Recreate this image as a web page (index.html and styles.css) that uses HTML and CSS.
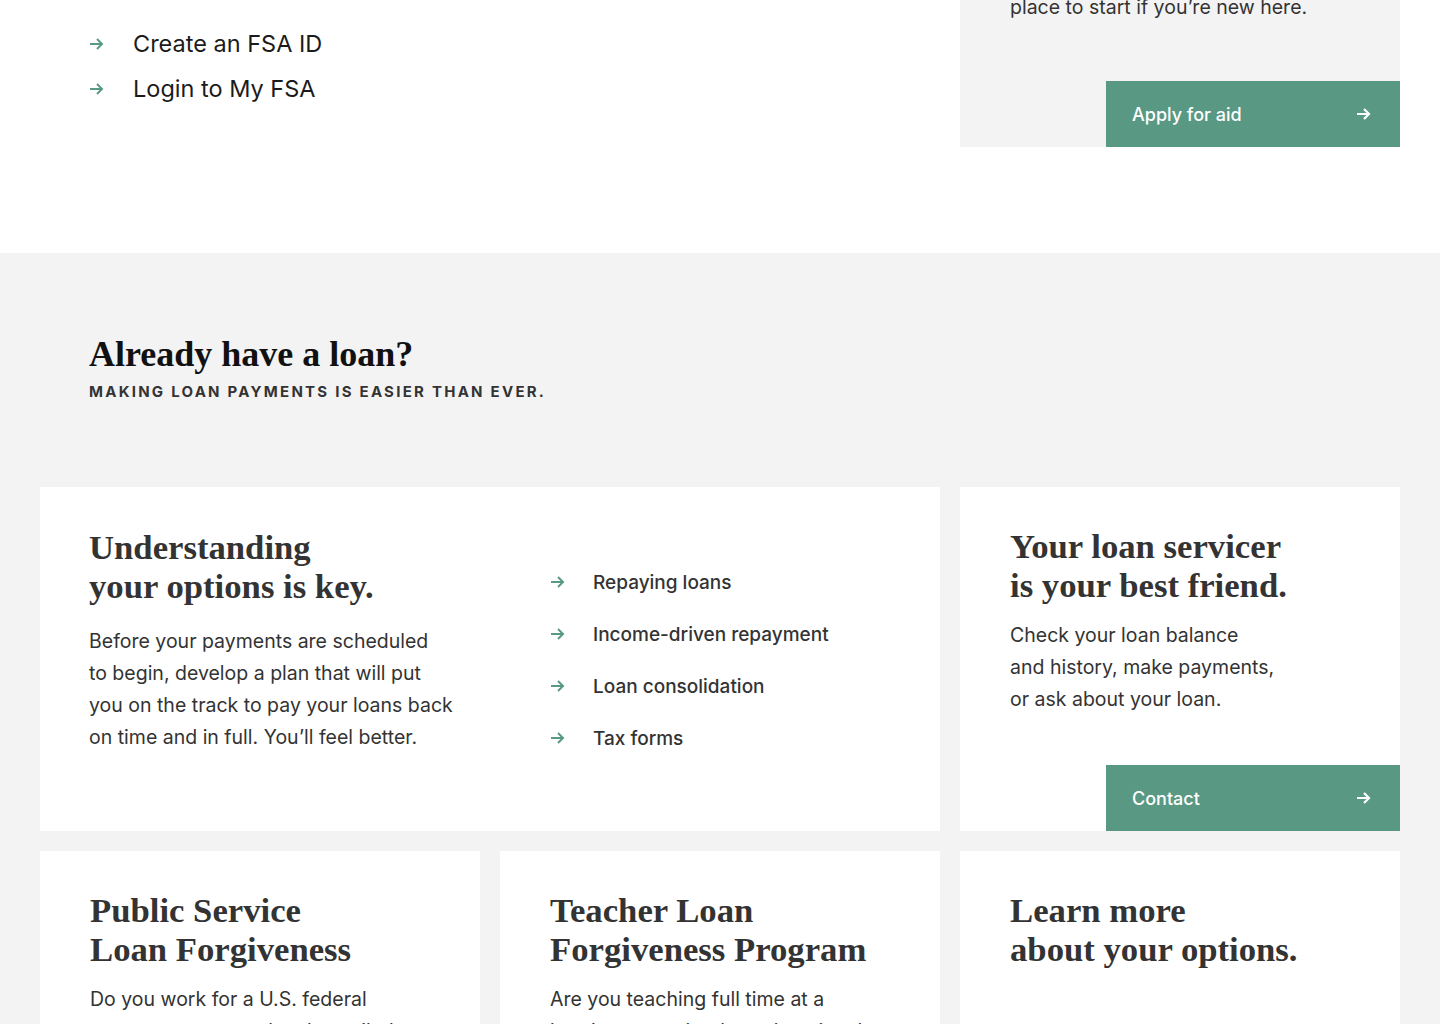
FILE: index.html
```html
<!DOCTYPE html>
<html lang="en">
<head>
<meta charset="utf-8">
<title>Federal Student Aid</title>
<link rel="stylesheet" href="styles.css">
</head>
<body>
<div class="page">
  <section class="top">
    <div class="top-left">
      <ul class="big-links">
        <li><svg class="arrow" viewBox="0 0 16 14"><path d="M1 7h12M8 2l5 5-5 5"/></svg><a href="#">Create an FSA ID</a></li>
        <li><svg class="arrow" viewBox="0 0 16 14"><path d="M1 7h12M8 2l5 5-5 5"/></svg><a href="#">Login to My FSA</a></li>
      </ul>
    </div>
    <div class="promo">
      <p class="promo-text">place to start if you’re new here.</p>
      <a class="btn" href="#"><span>Apply for aid</span><svg class="btn-arrow" viewBox="0 0 16 14"><path d="M1 7h12M8 2l5 5-5 5"/></svg></a>
    </div>
  </section>

  <section class="loans">
    <header class="loans-head">
      <h2 class="section-title">Already have a loan?</h2>
      <p class="eyebrow">Making loan payments is easier than ever.</p>
    </header>

    <div class="grid">
      <article class="card card-wide">
        <div class="card-copy">
          <h3 class="card-title">Understanding<br>your options is key.</h3>
          <p class="card-text">Before your payments are scheduled<br>to begin, develop a plan that will put<br>you on the track to pay your loans back<br>on time and in full. You’ll feel better.</p>
        </div>
        <ul class="link-list">
          <li><svg class="arrow" viewBox="0 0 16 14"><path d="M1 7h12M8 2l5 5-5 5"/></svg><a href="#">Repaying loans</a></li>
          <li><svg class="arrow" viewBox="0 0 16 14"><path d="M1 7h12M8 2l5 5-5 5"/></svg><a href="#">Income-driven repayment</a></li>
          <li><svg class="arrow" viewBox="0 0 16 14"><path d="M1 7h12M8 2l5 5-5 5"/></svg><a href="#">Loan consolidation</a></li>
          <li><svg class="arrow" viewBox="0 0 16 14"><path d="M1 7h12M8 2l5 5-5 5"/></svg><a href="#">Tax forms</a></li>
        </ul>
      </article>

      <article class="card card-cta">
        <h3 class="card-title">Your loan servicer<br>is your best friend.</h3>
        <p class="card-text tight">Check your loan balance<br>and history, make payments,<br>or ask about your loan.</p>
        <a class="btn" href="#"><span>Contact</span><svg class="btn-arrow" viewBox="0 0 16 14"><path d="M1 7h12M8 2l5 5-5 5"/></svg></a>
      </article>

      <article class="card card-small">
        <h3 class="card-title">Public Service<br>Loan Forgiveness</h3>
        <p class="card-text tight">Do you work for a U.S. federal<br>government, state, local, or tribal<br>organization?</p>
      </article>

      <article class="card card-small">
        <h3 class="card-title">Teacher Loan<br>Forgiveness Program</h3>
        <p class="card-text tight">Are you teaching full time at a<br>low-income school or educational<br>service agency?</p>
      </article>

      <article class="card card-small">
        <h3 class="card-title">Learn more<br>about your options.</h3>
        <ul class="link-list small-list">
          <li><svg class="arrow" viewBox="0 0 16 14"><path d="M1 7h12M8 2l5 5-5 5"/></svg><a href="#">Defaulted loans</a></li>
          <li><svg class="arrow" viewBox="0 0 16 14"><path d="M1 7h12M8 2l5 5-5 5"/></svg><a href="#">Loan forgiveness</a></li>
        </ul>
      </article>
    </div>
  </section>
</div>
</body>
</html>
```

FILE: styles.css
```css
* { box-sizing: border-box; }

html, body {
  margin: 0;
  padding: 0;
  background: #ffffff;
  overflow: hidden;
}

body {
  font-family: Inter, "Noto Sans", "Liberation Sans", sans-serif;
  color: #333333;
}

a { color: inherit; text-decoration: none; }
ul { list-style: none; margin: 0; padding: 0; }
p, h2, h3 { margin: 0; }

.page {
  margin-top: -40px;
}

.arrow {
  width: 16px;
  height: 14px;
  flex: none;
  fill: none;
  stroke: #5a9a84;
  stroke-width: 2;
}

/* Top */
.top {
  display: grid;
  grid-template-columns: 1fr 440px;
  column-gap: 20px;
  align-items: start;
  padding: 0 40px 106px;
}

.top-left {
  padding: 61px 0 0 49px;
}

.big-links li {
  display: flex;
  align-items: center;
  gap: 28px;
  height: 45px;
  font-size: 23.5px;
  color: #1b1b1b;
}

.promo {
  background: #f3f3f3;
  padding-top: 31px;
  display: flex;
  flex-direction: column;
}

.promo-text {
  padding-left: 50px;
  font-size: 19.5px;
  line-height: 32px;
  color: #333;
}

.btn {
  display: flex;
  align-items: center;
  justify-content: space-between;
  align-self: flex-end;
  width: 294px;
  height: 66px;
  padding: 0 28px 0 26px;
  background: #599883;
  color: #ffffff;
  font-size: 18px;
  font-weight: 500;
}

.promo .btn { margin-top: 58px; }

.btn-arrow {
  width: 16px;
  height: 14px;
  fill: none;
  stroke: #ffffff;
  stroke-width: 2.2;
}

/* Loans section */
.loans {
  background: #f3f3f3;
  padding: 81px 40px 40px;
}

.loans-head {
  padding-left: 49px;
  margin-bottom: 85px;
}

.section-title {
  font-family: "Liberation Serif", "Times New Roman", serif;
  font-weight: 700;
  font-size: 36px;
  line-height: 40px;
  color: #111;
}

.eyebrow {
  margin-top: 8px;
  font-size: 15px;
  line-height: 20px;
  font-weight: 700;
  letter-spacing: 2.25px;
  text-transform: uppercase;
  color: #333;
}

.grid {
  display: grid;
  grid-template-columns: repeat(3, 440px);
  gap: 20px;
}

.card {
  background: #ffffff;
  padding: 40px 50px 0;
}

.card-wide {
  grid-column: span 2;
  height: 344px;
  display: grid;
  grid-template-columns: 410px 1fr;
  column-gap: 51px;
  align-items: start;
  padding-left: 49px;
  padding-top: 41px;
}

.card-title {
  font-family: "Liberation Serif", "Times New Roman", serif;
  font-weight: 700;
  font-size: 34.7px;
  line-height: 39px;
  color: #333;
}

.card-text {
  margin-top: 19px;
  font-size: 19.5px;
  line-height: 32px;
  color: #333;
}

.card-text.tight { margin-top: 14px; }

.link-list {
  margin-top: 28px;
}

.link-list li {
  display: flex;
  align-items: center;
  gap: 27px;
  height: 52px;
  font-size: 19px;
  font-weight: 500;
  color: #333;
}

.card-cta {
  display: flex;
  flex-direction: column;
  padding-right: 0;
  padding-bottom: 0;
}

.card-cta .btn {
  margin-top: auto;
}

.card-small {
  height: 340px;
}

.small-list {
  margin-top: 38px;
}

.small-list li {
  gap: 31px;
}
```
